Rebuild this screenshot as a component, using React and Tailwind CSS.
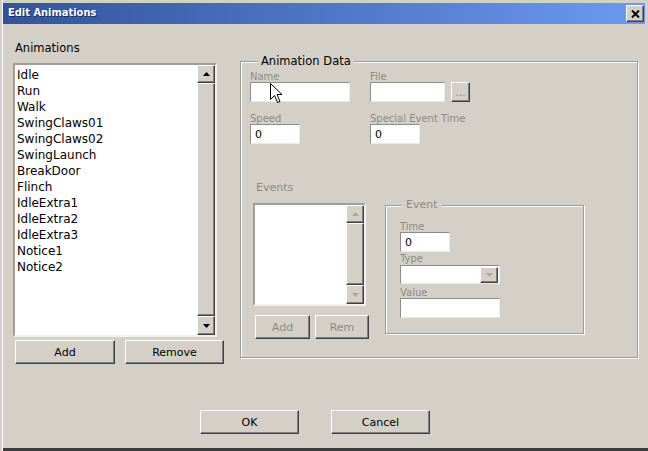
import React from "react";

const raised =
  "bg-[#d4d0c8] border border-t-white border-l-white border-r-[#404040] border-b-[#404040] shadow-[inset_-1px_-1px_0_#808080]";
const sunken =
  "bg-white border border-t-[#8e8c86] border-l-[#8e8c86] border-r-[#ecebe6] border-b-[#ecebe6]";
const grayText = "text-[#8c8a84]";

const animations = [
  "Idle",
  "Run",
  "Walk",
  "SwingClaws01",
  "SwingClaws02",
  "SwingLaunch",
  "BreakDoor",
  "Flinch",
  "IdleExtra1",
  "IdleExtra2",
  "IdleExtra3",
  "Notice1",
  "Notice2",
];

function Arrow({ up, disabled }) {
  return (
    <svg width="7" height="4" viewBox="0 0 7 4">
      <polygon
        points={up ? "3.5,0 7,4 0,4" : "0,0 7,0 3.5,4"}
        fill={disabled ? "#a9a79f" : "#000"}
      />
    </svg>
  );
}

function ScrollBar({ disabled }) {
  return (
    <div className="w-[18px] flex flex-col shrink-0">
      <div className={`h-[18px] flex items-center justify-center ${raised}`}>
        <Arrow up disabled={disabled} />
      </div>
      <div className={`flex-1 ${raised}`}></div>
      <div className={`h-[19px] flex items-center justify-center ${raised}`}>
        <Arrow disabled={disabled} />
      </div>
    </div>
  );
}

function Button({ children, className = "", disabled }) {
  return (
    <div
      className={`flex items-center justify-center pt-[2px] text-[11px] ${raised} ${
        disabled ? grayText : "text-black"
      } ${className}`}
    >
      {children}
    </div>
  );
}

function Label({ children, className = "" }) {
  return (
    <div className={`h-[12px] pt-[1px] leading-[12px] text-[10px] ${grayText} ${className}`}>
      {children}
    </div>
  );
}

export default function App() {
  return (
    <div className="relative w-[648px] h-[451px] bg-[#d4d0c8] overflow-hidden font-['DejaVu_Sans',sans-serif] text-black shadow-[inset_2px_0_0_#d4d0c8,inset_3px_0_0_#fff,inset_0_-3px_0_#3c3c3c]">
      {/* Title bar */}
      <div className="mx-[3px] mt-[3px] h-[21px] bg-linear-to-r from-[#34539c] to-[#6c9af2] flex items-center justify-between pl-[5px] pr-[1px]">
        <span className="font-['DejaVu_Sans_Condensed','Liberation_Sans',sans-serif] font-bold text-[11px] text-white [text-shadow:1px_1px_0_#1a2a55]">
          Edit Animations
        </span>
        <div className={`w-[18px] h-[17px] flex items-center justify-center ${raised}`}>
          <svg width="9" height="8" viewBox="0 0 9 8">
            <path d="M1 0.5 L8 7.5 M8 0.5 L1 7.5" stroke="#000" strokeWidth="2" />
          </svg>
        </div>
      </div>

      <div className="flex items-start">
        {/* Left column */}
        <div className="ml-[13px] mt-[16px] w-[211px] shrink-0">
          <div className="ml-[2px] h-[14px] pt-[1px] leading-[14px] text-[11.5px]">Animations</div>
          <div className="mt-[9px] w-[204px] h-[274px] flex bg-white border-2 border-t-[#a09e98] border-l-[#a09e98] border-r-[#f2f1ed] border-b-[#f2f1ed]">
            <div className="flex-1 pt-[2px] pl-[2px] text-[12px] leading-[16px]">
              {animations.map((a) => (
                <div key={a}>{a}</div>
              ))}
            </div>
            <ScrollBar />
          </div>
          <div className="mt-[3px] pl-[2px] flex gap-[10px]">
            <Button className="w-[100px] h-[24px]">Add</Button>
            <Button className="w-[99px] h-[24px]">Remove</Button>
          </div>
        </div>

        {/* Animation Data group */}
        <div className="ml-[16px] mt-[37px] w-[398px] h-[297px] border border-[#9c9a94] shadow-[1px_1px_0_#fff,inset_1px_1px_0_#fff]">
          <div className="-mt-[8px] ml-[17px] w-fit px-[3px] bg-[#d4d0c8] h-[14px] leading-[14px] text-[11.5px]">
            Animation Data
          </div>

          <div className="mt-[2px] ml-[9px] flex">
            <div className="w-[120px]">
              <Label>Name</Label>
              <div className={`w-[100px] h-[20px] ${sunken}`}></div>
            </div>
            <div>
              <Label>File</Label>
              <div className="flex gap-[6px]">
                <div className={`w-[75px] h-[20px] ${sunken}`}></div>
                <Button disabled className="w-[19px] h-[20px] text-[10px] leading-none pb-[2px]">
                  ...
                </Button>
              </div>
            </div>
          </div>

          <div className="mt-[10px] ml-[9px] flex">
            <div className="w-[120px]">
              <Label>Speed</Label>
              <div className={`w-[50px] h-[20px] pl-[4px] pt-[1px] text-[11px] leading-[18px] ${sunken}`}>0</div>
            </div>
            <div>
              <Label>Special Event Time</Label>
              <div className={`w-[50px] h-[20px] pl-[4px] pt-[1px] text-[11px] leading-[18px] ${sunken}`}>0</div>
            </div>
          </div>

          <div className="mt-[36px] ml-[12px] flex items-start">
            {/* Events list */}
            <div className="w-[116px] shrink-0">
              <div className={`ml-[3px] h-[14px] pt-[1px] leading-[14px] text-[11px] ${grayText}`}>Events</div>
              <div className="mt-[9px] w-[113px] h-[103px] flex bg-white border-2 border-t-[#a09e98] border-l-[#a09e98] border-r-[#f2f1ed] border-b-[#f2f1ed]">
                <div className="flex-1"></div>
                <ScrollBar disabled />
              </div>
              <div className="mt-[9px] flex">
                <Button disabled className="ml-[2px] w-[55px] h-[24px]">Add</Button>
                <Button disabled className="ml-[5px] w-[54px] h-[24px]">Rem</Button>
              </div>
            </div>

            {/* Event group */}
            <div className="ml-[16px] mt-[25px] w-[199px] h-[129px] border border-[#9c9a94] shadow-[1px_1px_0_#fff,inset_1px_1px_0_#fff]">
              <div className={`-mt-[8px] ml-[16px] w-fit px-[4px] bg-[#d4d0c8] h-[14px] leading-[14px] text-[11px] ${grayText}`}>
                Event
              </div>
              <div className="ml-[14px]">
                <Label className="mt-[8px]">Time</Label>
                <div className={`w-[50px] h-[20px] pl-[4px] pt-[1px] text-[11px] leading-[18px] ${sunken}`}>0</div>
                <Label>Type</Label>
                <div className={`mt-[1px] w-[100px] h-[19px] flex justify-end items-center pr-[1px] ${sunken}`}>
                  <div className={`w-[18px] h-[16px] flex items-center justify-center ${raised}`}>
                    <Arrow disabled />
                  </div>
                </div>
                <Label className="mt-[2px]">Value</Label>
                <div className={`w-[100px] h-[20px] ${sunken}`}></div>
              </div>
            </div>
          </div>
        </div>
      </div>

      {/* OK / Cancel */}
      <div className="mt-[46px] pl-[200px] flex gap-[32px]">
        <Button className="w-[99px] h-[24px]">OK</Button>
        <Button className="w-[99px] h-[24px]">Cancel</Button>
      </div>

      {/* Mouse cursor */}
      <svg className="absolute left-[270px] top-[83px]" width="13" height="21" viewBox="0 0 13 21">
        <path
          d="M0.5 0.5 L0.5 16.5 L4.5 12.5 L7.5 19.5 L10 18.5 L7 11.5 L12 11.5 Z"
          fill="#fff"
          stroke="#000"
          strokeWidth="1"
        />
      </svg>
    </div>
  );
}
